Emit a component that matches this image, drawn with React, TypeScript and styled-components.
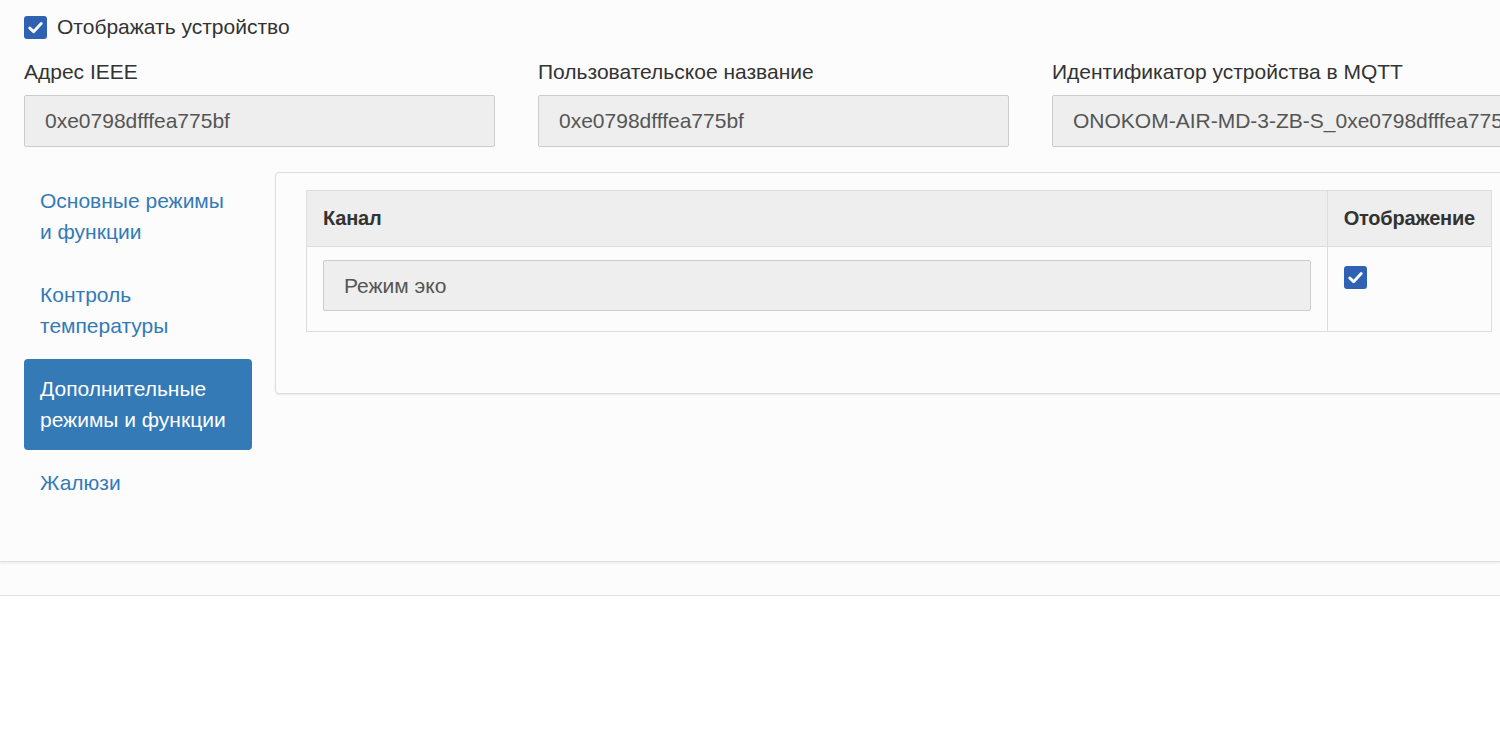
import React from 'react';
import styled, { createGlobalStyle } from 'styled-components';

const GlobalStyle = createGlobalStyle`
  html, body {
    margin: 0;
    padding: 0;
    background: #ffffff;
    overflow-x: hidden;
  }
  body {
    font-family: "Liberation Sans", Arial, sans-serif;
    font-size: 21px;
    color: #333333;
  }
`;

const Section = styled.div`
  background: #fcfcfc;
  padding: 12px 24px 47px;
  border-bottom: 1px solid #e0e0e0;
  box-shadow: 0 2px 2px rgba(0, 0, 0, 0.05);
  position: relative;
`;

const Strip = styled.div`
  height: 33px;
  background: #fcfcfc;
  border-bottom: 1px solid #e0e0e0;
  box-shadow: 0 2px 2px rgba(0, 0, 0, 0.05);
`;

const Container = styled.div`
  width: 1499px;
`;

const CheckRow = styled.label`
  display: flex;
  align-items: center;
  gap: 10px;
  height: 30px;
  line-height: 30px;
`;

const CheckBox = styled.span<{ $size?: number }>`
  display: inline-flex;
  align-items: center;
  justify-content: center;
  width: ${(p) => p.$size ?? 23}px;
  height: ${(p) => p.$size ?? 23}px;
  border-radius: 3px;
  background: #2f62b3;
  flex: none;
`;

const Fields = styled.div`
  display: grid;
  grid-template-columns: repeat(3, 471px);
  column-gap: 43px;
  margin-top: 15px;
`;

const Field = styled.div`
  display: flex;
  flex-direction: column;
`;

const Label = styled.div`
  line-height: 30px;
  margin-bottom: 8px;
`;

const Input = styled.div<{ $height?: number }>`
  height: ${(p) => p.$height ?? 52}px;
  box-sizing: border-box;
  background: #eeeeee;
  border: 1px solid #cccccc;
  border-radius: 2px;
  padding: 0 20px;
  display: flex;
  align-items: center;
  color: #555555;
  white-space: nowrap;
  overflow: hidden;
`;

const Body = styled.div`
  display: flex;
  gap: 23px;
  margin-top: 24px;
  align-items: flex-start;
`;

const Nav = styled.ul`
  list-style: none;
  margin: 0;
  padding: 0;
  width: 228px;
  flex: none;
  display: flex;
  flex-direction: column;
  gap: 3px;
`;

const NavItem = styled.li<{ $active?: boolean }>`
  padding: 15px 16px;
  line-height: 30.5px;
  border-radius: 4px;
  color: ${(p) => (p.$active ? '#ffffff' : '#337ab7')};
  background: ${(p) => (p.$active ? '#337ab7' : 'transparent')};
  cursor: pointer;
`;

const Panel = styled.div`
  flex: 1;
  margin-top: 1px;
  background: #fcfcfc;
  border: 1px solid #dddddd;
  border-radius: 4px;
  box-shadow: 0 1px 2px rgba(0, 0, 0, 0.08);
  padding: 17px 30px 61px;
`;

const Table = styled.table`
  width: 100%;
  border-collapse: collapse;
  border: 1px solid #dddddd;
  background: #fcfcfc;
`;

const Th = styled.th<{ $width?: number }>`
  text-align: left;
  font-weight: bold;
  font-size: 20px;
  letter-spacing: -0.2px;
  background: #eeeeee;
  padding: 12px 16px 13px;
  line-height: 30px;
  border: 1px solid #dddddd;
  width: ${(p) => (p.$width ? `${p.$width}px` : 'auto')};
`;

const Td = styled.td`
  padding: 13px 16px 20px;
  border: 1px solid #dddddd;
  vertical-align: top;
`;

const CellCheck = styled.div`
  padding-top: 6px;
`;

const Check = () => (
  <svg width="17" height="17" viewBox="0 0 16 16">
    <path d="M2.6 8.4 L6.2 11.9 L13.4 4.3" fill="none" stroke="#fff" strokeWidth="2.7" strokeLinecap="round" strokeLinejoin="round" />
  </svg>
);

const navItems = [
  'Основные режимы и функции',
  'Контроль температуры',
  'Дополнительные режимы и функции',
  'Жалюзи',
];

const App: React.FC = () => {
  return (
    <>
      <GlobalStyle />
      <Section>
        <Container>
          <CheckRow>
            <CheckBox>
              <Check />
            </CheckBox>
            Отображать устройство
          </CheckRow>
          <Fields>
            <Field>
              <Label>Адрес IEEE</Label>
              <Input>0xe0798dfffea775bf</Input>
            </Field>
            <Field>
              <Label>Пользовательское название</Label>
              <Input>0xe0798dfffea775bf</Input>
            </Field>
            <Field>
              <Label>Идентификатор устройства в MQTT</Label>
              <Input>ONOKOM-AIR-MD-3-ZB-S_0xe0798dfffea775bf</Input>
            </Field>
          </Fields>
          <Body>
            <Nav>
              {navItems.map((item, i) => (
                <NavItem key={item} $active={i === 2}>
                  {item}
                </NavItem>
              ))}
            </Nav>
            <Panel>
              <Table>
                <thead>
                  <tr>
                    <Th>Канал</Th>
                    <Th $width={131}>Отображение</Th>
                  </tr>
                </thead>
                <tbody>
                  <tr>
                    <Td>
                      <Input $height={51}>Режим эко</Input>
                    </Td>
                    <Td>
                      <CellCheck>
                        <CheckBox>
                          <Check />
                        </CheckBox>
                      </CellCheck>
                    </Td>
                  </tr>
                </tbody>
              </Table>
            </Panel>
          </Body>
        </Container>
      </Section>
      <Strip />
    </>
  );
};

export default App;
